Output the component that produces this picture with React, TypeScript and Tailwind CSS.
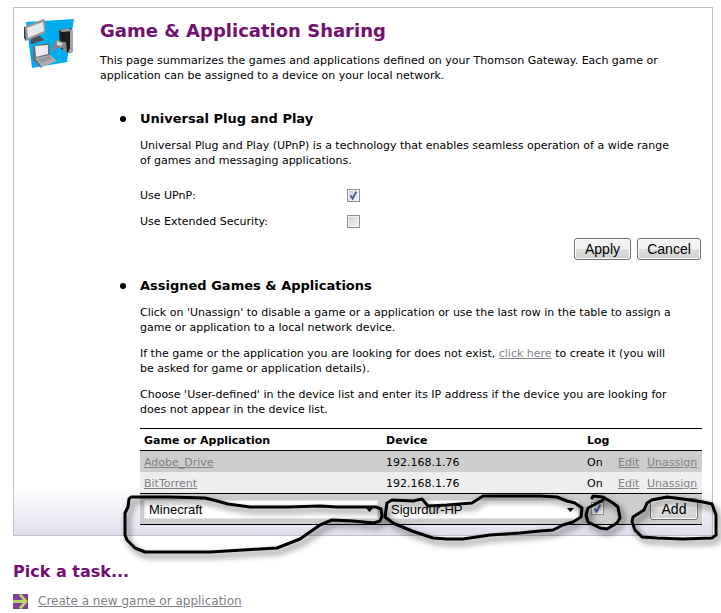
import React, { useState } from "react";

const buttonStyle =
  "h-[22px] rounded-[3px] border border-[#707070] bg-linear-to-b from-[#f2f2f2] from-50% via-[#dfdfdf] via-50% to-[#cfcfcf] font-['Liberation_Sans',Arial,sans-serif] text-[14px] leading-[18px] text-black shadow-[inset_0_0_0_1px_#fcfcfc]";

const linkStyle = "text-[#817f86] underline";

function DevicesIcon() {
  return (
    <svg viewBox="0 0 50 50" className="h-[50px] w-[50px]" aria-hidden="true">
      <polygon points="2,4 50,1 43,43 45,43 43,44 8,50" fill="#00aeef" />
      <polygon points="8,20 15,17 20,22 8,26 6,24" fill="#4f4f55" />
      <polygon points="0,9 19,1 21,2 21,15 2,23 0,20" fill="#98989d" />
      <polygon points="0,9 1,9 2,23 0,20" fill="#3c3c42" />
      <polygon points="3,10 19,4 20,13 4,20" fill="#e9e9eb" />
      <polygon points="35,12 47,10 49,34 45,35 36,30" fill="#1c1a1c" />
      <polygon points="35,12 45,10 49,13 38,14" fill="#97979c" />
      <polygon points="46,13 49,13 49,34 44,35 46,30" fill="#a3a3a8" />
      <path d="M31 23l3-1 5 2 3 0 1 9-2 1-3-4-5 0-3 2-3 1 2-5z" fill="#85858b" />
      <path d="M33 23l4 2 2 0-2 3-4-1z" fill="#d4d4d8" />
      <polygon points="9,28 25,25 26,37 12,41 18,49 17,50 9,42" fill="#6d6d73" />
      <polygon points="11,28 24,27 24,36 12,39" fill="#ececee" />
      <polygon points="11,40 26,37 33,43 18,49" fill="#adadb2" />
      <polygon points="14,41 25,38 28,41 17,45" fill="#96969c" />
    </svg>
  );
}

function ArrowIcon() {
  return (
    <svg viewBox="0 0 15 15" className="h-[15px] w-[15px] shrink-0" aria-hidden="true">
      <rect width="15" height="15" fill="#7d3f98" />
      <path d="M0 7.5h13M7 0.5l6 7-6 7" fill="none" stroke="#bdd268" strokeWidth="2.8" />
    </svg>
  );
}

type TickProps = { id: string; label?: string; initial: boolean };

function TickBox({ id, label, initial }: TickProps) {
  const [checked, setChecked] = useState(initial);
  return (
    <span className="relative block h-[13px] w-[13px]">
      <input
        id={id}
        type="checkbox"
        aria-label={label}
        checked={checked}
        onChange={(event) => setChecked(event.target.checked)}
        className="block h-[13px] w-[13px] appearance-none border border-[#8e8f8f] bg-linear-to-br from-[#cdd1d6] to-[#f6f6f6] shadow-[inset_0_0_0_1px_#f4f4f4]"
      />
      {checked && (
        <svg viewBox="0 0 13 13" className="pointer-events-none absolute inset-0" aria-hidden="true">
          <path d="M3.6 6.4l2 3.2L9.3 2.6" fill="none" stroke="#43599c" strokeWidth="1.9" />
        </svg>
      )}
    </span>
  );
}

function Picker({ label, options }: { label: string; options: string[] }) {
  return (
    <span className="relative block">
      <select
        aria-label={label}
        className="block h-[19px] w-full appearance-none border border-[#dfe6ee] bg-white pl-1 font-['Liberation_Sans',Arial,sans-serif] text-[13px] leading-[17px] text-black"
      >
        {options.map((option) => (
          <option key={option}>{option}</option>
        ))}
      </select>
      <svg viewBox="0 0 7 4" className="pointer-events-none absolute top-2 right-[5px] h-1 w-[7px]" aria-hidden="true">
        <path d="M0 0h7L3.5 4z" fill="#000" />
      </svg>
    </span>
  );
}

function PenMarks() {
  return (
    <svg
      viewBox="120 488 601 77"
      className="pointer-events-none absolute top-[60px] -left-5 h-[77px] w-[601px] overflow-visible drop-shadow-[3px_4px_3px_rgba(0,0,0,0.6)]"
      fill="none"
      stroke="#000"
      strokeWidth="3"
      strokeLinecap="round"
      strokeLinejoin="round"
      aria-hidden="true"
    >
      <path d="M131 497L170 497 205 498 217 501 228 504 250 507 288 507 320 506 337 507 376 507 381 509 382 516 380 521 374 523 353 521 332 520 320 525 300 539 277 548 243 550 210 552 145 552 135 548 127 540 125 535 125 513 128 507 129 499z" />
      <path d="M422 499L413 501 392 500 387 503 385 517 393 523 412 531 433 538 447 539 463 539 490 535 520 533 540 531 553 530 563 525 573 522 581 517 582 508 575 503 567 501 557 497 540 496 483 496 472 503 447 505 428 506z" />
      <path d="M592 498L593 496 603 497 613 503 618 507 620 518 617 523 607 529 600 528 588 522 586 515 588 508 603 500" />
      <path d="M712 504L703 502 683 499 667 497 652 500 647 503 644 510 633 517 632 522 635 530 642 537 657 538 683 539 712 538 716 535 716 515z" />
    </svg>
  );
}

function Section({ title, children }: { title: string; children: React.ReactNode }) {
  return (
    <li className="grid grid-cols-[40px_1fr]">
      <span className="mt-[5px] ml-5 h-[6px] w-[6px] rounded-full bg-black" />
      <div>
        <h2 className="text-[13px] leading-4 font-bold">{title}</h2>
        {children}
      </div>
    </li>
  );
}

const assigned = [
  { name: "Adobe_Drive", device: "192.168.1.76", log: "On", shade: "bg-[#cdcdcd]" },
  { name: "BitTorrent", device: "192.168.1.76", log: "On", shade: "bg-[#eeeeee]" },
];

export default function App() {
  return (
    <div className="bg-white pt-[7px] pr-2 pl-[13px] font-['DejaVu_Sans',Verdana,sans-serif] text-[11px] leading-[15px] text-black">
      <main className="flex gap-[26px] border border-[#c0c0cc] bg-linear-to-t from-[#e2deee] to-white to-[48px] px-[10px] py-[10px]">
        <div className="shrink-0">
          <DevicesIcon />
        </div>
        <div className="min-w-0 flex-1 pt-px">
          <h1 className="text-[18px] leading-6 font-bold text-[#71106e]">Game &amp; Application Sharing</h1>
          <p className="mt-[10px]">
            This page summarizes the games and applications defined on your Thomson Gateway. Each game or application can
            be assigned to a device on your local network.
          </p>
          <ul className="mt-7 flex flex-col gap-[18px]">
            <Section title="Universal Plug and Play">
              <p className="mt-[11px] pr-6">
                Universal Plug and Play (UPnP) is a technology that enables seamless operation of a wide range of games
                and messaging applications.
              </p>
              <form onSubmit={(event) => event.preventDefault()}>
                <div className="mt-[14px] grid grid-cols-[207px_1fr] auto-rows-[26px] items-center">
                  <label htmlFor="upnp">Use UPnP:</label>
                  <TickBox id="upnp" initial={true} />
                  <label htmlFor="security">Use Extended Security:</label>
                  <TickBox id="security" initial={false} />
                </div>
                <div className="mt-1 flex justify-end gap-[6px] pr-px">
                  <button type="submit" className={`${buttonStyle} w-[57px]`}>
                    Apply
                  </button>
                  <button type="reset" className={`${buttonStyle} w-16`}>
                    Cancel
                  </button>
                </div>
              </form>
            </Section>
            <Section title="Assigned Games &amp; Applications">
              <div className="my-[11px] flex flex-col gap-[11px] pr-6">
                <p>
                  Click on 'Unassign' to disable a game or a application or use the last row in the table to assign a
                  game or application to a local network device.
                </p>
                <p>
                  If the game or the application you are looking for does not exist,{" "}
                  <a href="#create" className={linkStyle}>
                    click here
                  </a>{" "}
                  to create it (you will be asked for game or application details).
                </p>
                <p>
                  Choose 'User-defined' in the device list and enter its IP address if the device you are looking for
                  does not appear in the device list.
                </p>
              </div>
              <div className="relative">
                <table className="w-full table-fixed border-separate border-spacing-0 text-left">
                  <colgroup>
                    <col />
                    <col className="w-[201px]" />
                    <col className="w-[31px]" />
                    <col className="w-[29px]" />
                    <col className="w-[59px]" />
                  </colgroup>
                  <thead>
                    <tr className="h-[23px] bg-white">
                      <th className="border-y border-black px-1 pt-[2px]">Game or Application</th>
                      <th className="border-y border-black px-1 pt-[2px]">Device</th>
                      <th className="border-y border-black px-1 pt-[2px]">Log</th>
                      <td colSpan={2} className="border-y border-black" />
                    </tr>
                  </thead>
                  <tbody>
                    {assigned.map((row) => (
                      <tr key={row.name} className={`h-[21px] ${row.shade}`}>
                        <td className="px-1 pt-[2px]">
                          <a href="#details" className={linkStyle}>
                            {row.name}
                          </a>
                        </td>
                        <td className="px-1 pt-[2px]">{row.device}</td>
                        <td className="px-1 pt-[2px]">{row.log}</td>
                        <td className="px-1 pt-[2px]">
                          <a href="#edit" className={linkStyle}>
                            Edit
                          </a>
                        </td>
                        <td className="px-1 pt-[2px]">
                          <a href="#unassign" className={linkStyle}>
                            Unassign
                          </a>
                        </td>
                      </tr>
                    ))}
                    <tr className="h-8 bg-[#cdcdcd]">
                      <td className="border-y border-black px-1">
                        <Picker label="Game or Application" options={["Minecraft"]} />
                      </td>
                      <td className="border-y border-black px-1">
                        <Picker label="Device" options={["Sigurdur-HP"]} />
                      </td>
                      <td className="border-y border-black pb-[2px] pl-2">
                        <TickBox id="log" label="Log" initial={true} />
                      </td>
                      <td colSpan={2} className="border-y border-black pr-1 text-right">
                        <button type="button" className={`${buttonStyle} w-12`}>
                          Add
                        </button>
                      </td>
                    </tr>
                  </tbody>
                </table>
                <PenMarks />
              </div>
            </Section>
          </ul>
        </div>
      </main>
      <section className="pt-[26px]">
        <h2 className="text-[16px] leading-5 font-bold text-[#71106e]">Pick a task...</h2>
        <div className="mt-3 flex items-center gap-[10px]">
          <ArrowIcon />
          <a href="#create" className={`${linkStyle} text-[12px]`}>
            Create a new game or application
          </a>
        </div>
      </section>
    </div>
  );
}
